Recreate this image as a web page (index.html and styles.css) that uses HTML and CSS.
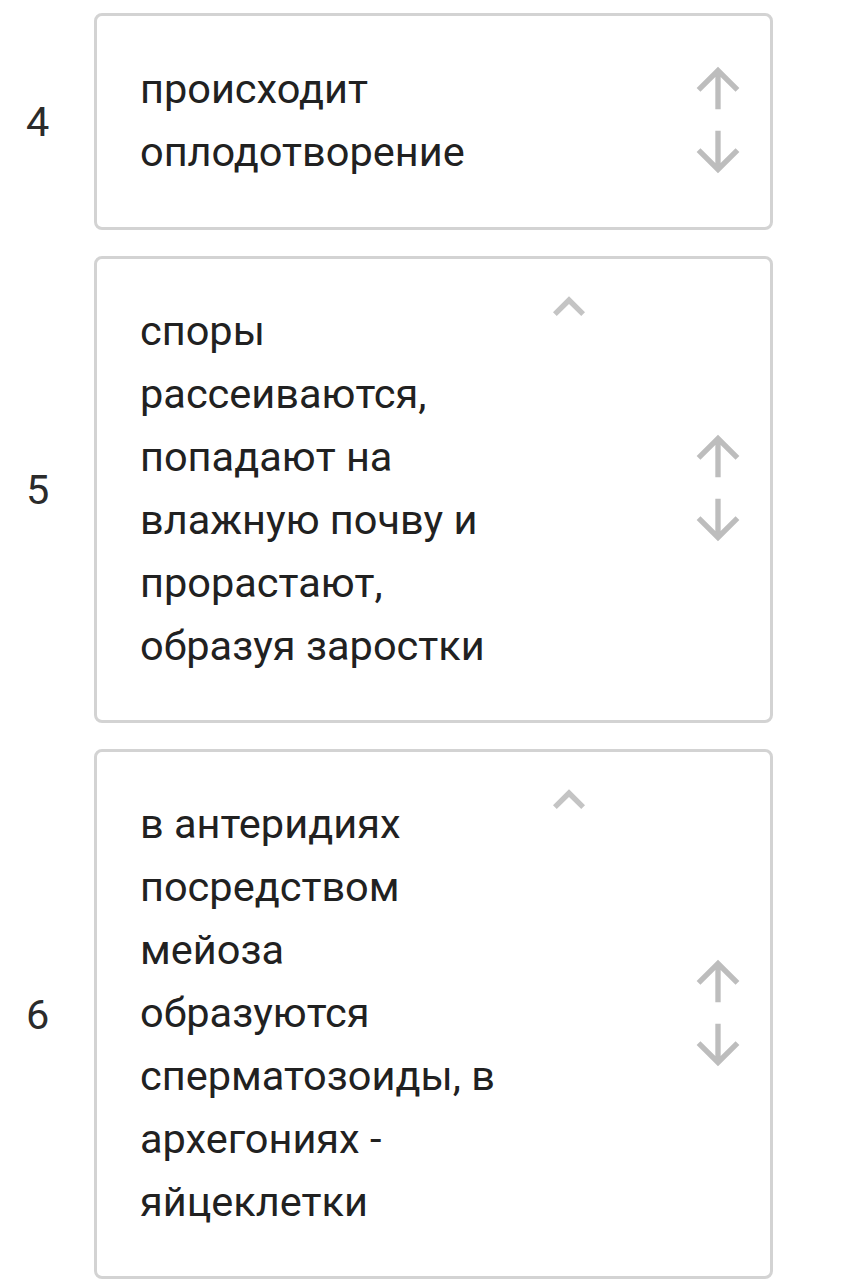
FILE: index.html
```html
<!DOCTYPE html>
<html lang="ru">
<head>
    <meta charset="UTF-8">
    <meta name="viewport" content="width=device-width, initial-scale=1.0">
    <title>Последовательность</title>
    <link rel="stylesheet" href="styles.css">
</head>
<body>
    <div class="order-list">
        <div class="order-row">
            <div class="order-num">4</div>
            <div class="order-card">
                <div class="order-text">происходит оплодотворение</div>
                <div class="order-controls">
                    <svg class="ctl" viewBox="0 0 24 24"><path d="M4 12l1.41 1.41L11 7.83V20h2V7.83l5.58 5.59L20 12l-8-8-8 8z"/></svg>
                    <svg class="ctl" viewBox="0 0 24 24"><path d="M20 12l-1.41-1.41L13 16.17V4h-2v12.17l-5.58-5.59L4 12l8 8 8-8z"/></svg>
                </div>
            </div>
        </div>

        <div class="order-row">
            <div class="order-num">5</div>
            <div class="order-card">
                <svg class="caret" viewBox="0 0 24 24"><path d="M12 8l-6 6 1.41 1.41L12 10.83l4.59 4.58L18 14z"/></svg>
                <div class="order-text">споры рассеиваются, попадают на влажную почву и прорастают, образуя заростки</div>
                <div class="order-controls">
                    <svg class="ctl" viewBox="0 0 24 24"><path d="M4 12l1.41 1.41L11 7.83V20h2V7.83l5.58 5.59L20 12l-8-8-8 8z"/></svg>
                    <svg class="ctl" viewBox="0 0 24 24"><path d="M20 12l-1.41-1.41L13 16.17V4h-2v12.17l-5.58-5.59L4 12l8 8 8-8z"/></svg>
                </div>
            </div>
        </div>

        <div class="order-row">
            <div class="order-num">6</div>
            <div class="order-card">
                <svg class="caret" viewBox="0 0 24 24"><path d="M12 8l-6 6 1.41 1.41L12 10.83l4.59 4.58L18 14z"/></svg>
                <div class="order-text">в антеридиях посредством мейоза образуются сперматозоиды, в архегониях - яйцеклетки</div>
                <div class="order-controls">
                    <svg class="ctl" viewBox="0 0 24 24"><path d="M4 12l1.41 1.41L11 7.83V20h2V7.83l5.58 5.59L20 12l-8-8-8 8z"/></svg>
                    <svg class="ctl" viewBox="0 0 24 24"><path d="M20 12l-1.41-1.41L13 16.17V4h-2v12.17l-5.58-5.59L4 12l8 8 8-8z"/></svg>
                </div>
            </div>
        </div>
    </div>
</body>
</html>
```

FILE: styles.css
```css
* {
    margin: 0;
    padding: 0;
    box-sizing: border-box;
    font-family: Roboto, "Liberation Sans", sans-serif;
}

body {
    background-color: #fff;
    color: #212121;
}

.order-list {
    padding-top: 13px;
    width: 773px;
}

.order-row {
    display: flex;
    align-items: center;
    margin-bottom: 26px;
}

.order-num {
    width: 94px;
    padding-left: 26px;
    font-size: 41.5px;
    color: #2b2b2b;
}

.order-card {
    position: relative;
    flex: 1;
    display: flex;
    align-items: center;
    justify-content: space-between;
    border: 3px solid #d3d3d3;
    border-radius: 8px;
    padding: 40px 20px 43px 43px;
}

.order-text {
    width: 372px;
    font-size: 41.5px;
    line-height: 63px;
}

.order-controls {
    display: flex;
    flex-direction: column;
}

.ctl {
    width: 64px;
    height: 64px;
    fill: #bdbdbd;
    display: block;
}

.caret {
    position: absolute;
    top: 16px;
    left: 440px;
    width: 64px;
    height: 64px;
    fill: #c4c4c4;
}
```
